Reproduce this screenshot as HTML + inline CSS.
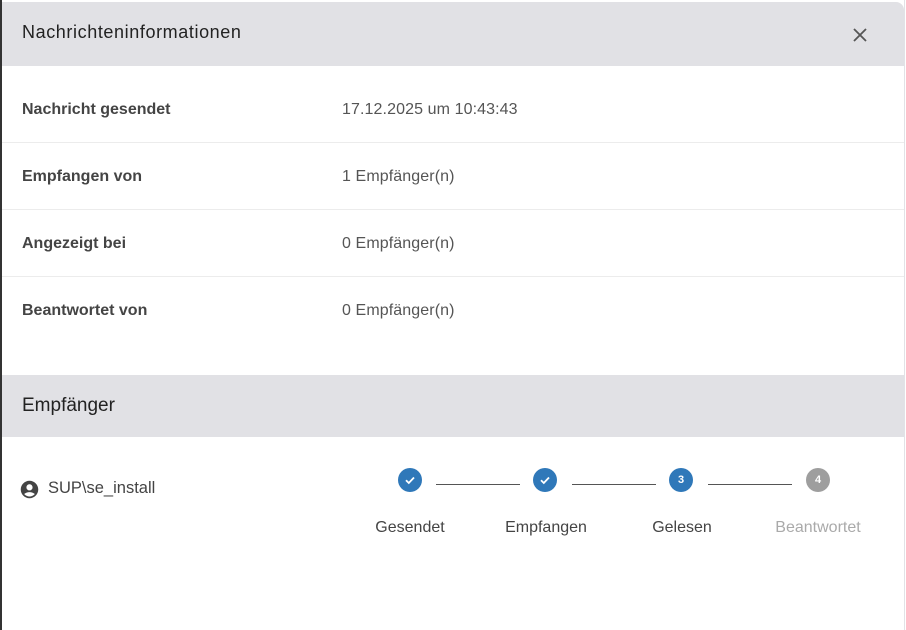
<!DOCTYPE html>
<html><head><meta charset="utf-8"><style>
*{margin:0;padding:0;box-sizing:border-box}
body{width:906px;height:630px;background:#fff;font-family:"Liberation Sans",Roboto,sans-serif;position:relative;overflow:hidden}
.frame{position:absolute;left:0;top:0;width:906px;height:630px;border-left:2px solid #333;}
.rb{position:absolute;left:904px;top:0;width:1px;height:630px;background:#e2e2e6}
.hdr{position:absolute;left:2px;top:2px;width:902px;height:64px;background:#e1e1e5;border-top-right-radius:8px}
.hdr .t{position:absolute;left:20px;top:20px;font-size:18px;letter-spacing:0.6px;color:#222}
.x{position:absolute;left:851px;top:26px}
.row{position:absolute;left:2px;width:902px;border-bottom:1px solid #ececec;height:67px}
.lbl{position:absolute;left:20px;font-size:16px;font-weight:bold;color:#444}
.val{position:absolute;left:340px;font-size:16px;letter-spacing:0.1px;color:#555}
.h2{position:absolute;left:2px;top:375px;width:902px;height:62px;background:#e1e1e5}
.h2 .t{position:absolute;left:20px;top:20px;font-size:19px;color:#222}
.c{position:absolute;width:24px;height:24px;border-radius:50%;color:#fff;font-size:11px;font-weight:bold;text-align:center;line-height:24px}
.ln{position:absolute;height:1px;background:#555;top:484px}
.sl{position:absolute;top:519px;font-size:16px;color:#444;transform:translateX(-50%)}
</style></head><body>
<div class="frame"></div><div class="rb"></div>
<div class="hdr"><div class="t">Nachrichteninformationen</div>
<svg class="x" width="14" height="14" viewBox="0 0 14 14"><path d="M1 1L13 13M13 1L1 13" stroke="#555" stroke-width="1.8"/></svg></div>
<div class="row" style="top:76px"><div class="lbl" style="top:25px">Nachricht gesendet</div><div class="val" style="top:25px">17.12.2025 um 10:43:43</div></div>
<div class="row" style="top:143px"><div class="lbl" style="top:25px">Empfangen von</div><div class="val" style="top:25px">1 Empfänger(n)</div></div>
<div class="row" style="top:210px"><div class="lbl" style="top:25px">Angezeigt bei</div><div class="val" style="top:25px">0 Empfänger(n)</div></div>
<div class="row" style="top:277px;border:none"><div class="lbl" style="top:25px">Beantwortet von</div><div class="val" style="top:25px">0 Empfänger(n)</div></div>
<div class="h2"><div class="t">Empfänger</div></div>
<svg style="position:absolute;left:19px;top:479px" width="21" height="21" viewBox="0 0 24 24"><path fill="#444" d="M12 2C6.48 2 2 6.48 2 12s4.48 10 10 10 10-4.48 10-10S17.52 2 12 2zm0 4c1.930 0 3.5 1.57 3.5 3.5S13.93 13 12 13s-3.5-1.57-3.5-3.5S10.07 6 12 6zm0 14c-2.03 0-4.43-.82-6.14-2.88C7.55 15.8 9.68 15 12 15s4.45.8 6.14 2.120C16.43 19.18 14.03 20 12 20z"/></svg>
<div style="position:absolute;left:48px;top:479px;font-size:16.5px;color:#444">SUP\se_install</div>
<div class="c" style="left:398px;top:468px;background:#2f78b9"><svg width="12" height="12" viewBox="0 0 12 12" style="margin-top:6px"><path d="M2 6.2L4.8 9 10 3.5" stroke="#fff" stroke-width="1.8" fill="none"/></svg></div>
<div class="ln" style="left:436px;width:84px"></div>
<div class="c" style="left:533px;top:468px;background:#2f78b9"><svg width="12" height="12" viewBox="0 0 12 12" style="margin-top:6px"><path d="M2 6.2L4.8 9 10 3.5" stroke="#fff" stroke-width="1.8" fill="none"/></svg></div>
<div class="ln" style="left:572px;width:84px"></div>
<div class="c" style="left:669px;top:468px;background:#2f78b9">3</div>
<div class="ln" style="left:708px;width:84px"></div>
<div class="c" style="left:806px;top:468px;background:#9e9e9e">4</div>
<div class="sl" style="left:410px">Gesendet</div>
<div class="sl" style="left:546px">Empfangen</div>
<div class="sl" style="left:682px">Gelesen</div>
<div class="sl" style="left:818px;color:#aaa">Beantwortet</div>
</body></html>
